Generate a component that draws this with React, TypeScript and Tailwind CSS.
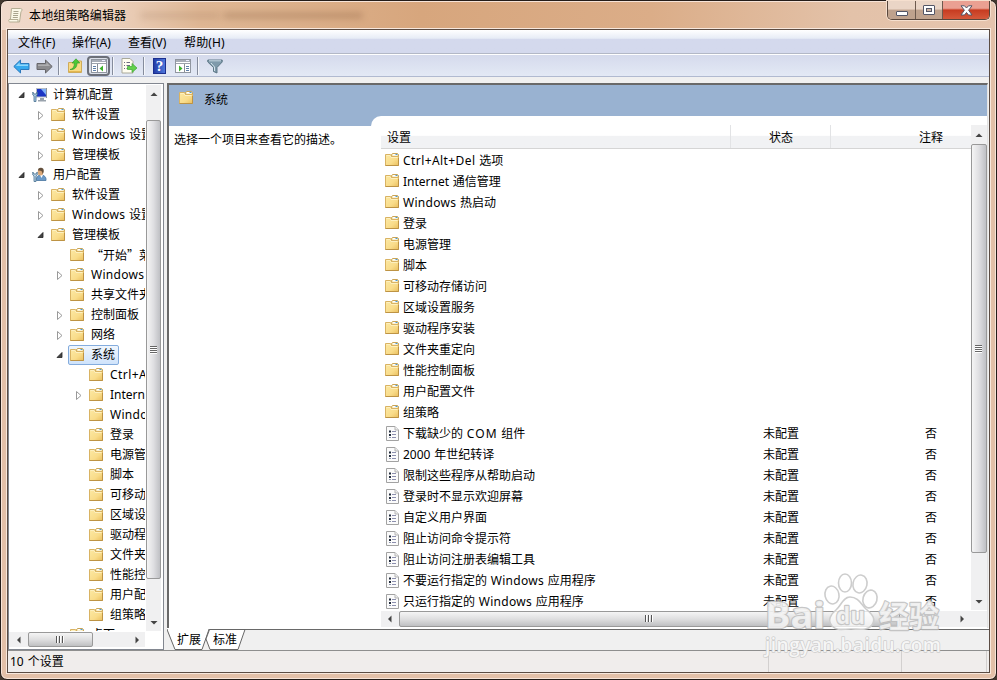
import React from "react";

const FolderIcon = ({ className = "" }: { className?: string }) => (
  <svg width="15" height="14" viewBox="0 0 15 14" className={"shrink-0 " + className}>
    <defs>
      <linearGradient id="fold" x1="0" y1="0" x2="1" y2="1">
        <stop offset="0" stopColor="#fce9a4" />
        <stop offset="0.6" stopColor="#f9dc8a" />
        <stop offset="1" stopColor="#eabf5e" />
      </linearGradient>
    </defs>
    <path d="M6.500 4V1.500L7.500 .5H12.500L13.500 1.500V4Z" fill="#f6e4ae" stroke="#c9a457" />
    <path d="M8 1H12V2.500H8Z" fill="#fff" />
    <path d="M10.500 1H12.500V2H10.500Z" fill="#4a9bd8" />
    <path d="M.5 1.500H5.500L6.500 3.500H13.500V12.500H.5Z" fill="url(#fold)" stroke="#d9b363" />
    <path d="M1.500 2.500H5L6 4.500H12.500" fill="none" stroke="#fdf0c0" />
    <path d="M.5 12.500H13.500V5" fill="none" stroke="#bd9344" />
  </svg>
);

const PolicyIcon = () => (
  <svg width="15" height="15" viewBox="0 0 15 15" className="shrink-0">
    <path d="M1.500 .5H10L13.500 4V14.500H1.500Z" fill="#fbfbfb" stroke="#a2a2a2" />
    <path d="M10 .5V4H13.500" fill="#eee" stroke="#b5b5b5" />
    <path d="M4 4.500H6V6.500H4ZM4 8H6V10H4Z" fill="#222c3c" />
    <path d="M4 11.500H6" stroke="#8a93a8" />
    <path d="M7 5.500H11M7 8.500H11M7 11.500H11" stroke="#8c8fae" />
  </svg>
);

const ComputerIcon = () => (
  <svg width="16" height="16" viewBox="0 0 16 16" className="shrink-0">
    <rect x="4.500" y="1.500" width="10" height="8.500" fill="#1b35c4" stroke="#b7bec8" />
    <path d="M9 2H14V8Z" fill="#7fb0f8" />
    <path d="M14.500 1V11" stroke="#8b939d" />
    <path d="M8 11H12V13H14V14.500H6V13H8Z" fill="#9aa3ad" />
    <path d="M.8 5V8L2 9V14.500H4V9L5.200 8V5L4 7H2Z" fill="#aac8df" stroke="#46708f" strokeWidth=".8" />
  </svg>
);

const UserIcon = () => (
  <svg width="16" height="16" viewBox="0 0 16 16" className="shrink-0">
    <path d="M4.500 13.500C4 10 6 8 9 8S14.500 10 14 13.500Z" fill="#6b9ac8" stroke="#47759f" strokeWidth=".8" />
    <path d="M8 8L9.500 11L11 8Z" fill="#fff" />
    <ellipse cx="8.500" cy="5" rx="2.800" ry="3.500" fill="#dba878" />
    <path d="M6 3.500C6 1 8 .5 10 1S12.500 5 10.500 7C10.500 4 9 3.200 6 3.500Z" fill="#64503c" />
    <path d="M.8 5V8L2 9V14.500H4V9L5.200 8V5L4 7H2Z" fill="#b9d2e5" stroke="#46708f" strokeWidth=".8" />
  </svg>
);

const Arrow = ({ open }: { open: boolean }) =>
  open ? (
    <svg width="8" height="8" viewBox="0 0 8 8">
      <path d="M6 1.500V6.500H1Z" fill="#444" stroke="#222" strokeWidth=".8" />
    </svg>
  ) : (
    <svg width="8" height="9" viewBox="0 0 8 9">
      <path d="M1.500 .5V8.500L6 4.500Z" fill="#fff" stroke="#999" strokeWidth="1" />
    </svg>
  );

const tracking: Record<string, string> = {
  Windows: "tracking-[0.3px]",
  "Ctrl+Alt+Del": "tracking-[0.42px]",
  COM: "tracking-[1.1px]",
};

/* Gives each Latin word of a mixed label its own letter spacing. */
const Label = ({ text }: { text: string }) => (
  <span className="[word-spacing:0.6px]">
    {text.split(/([A-Za-z+]+)/).map((part, i) =>
      tracking[part] ? (
        <span key={i} className={tracking[part]}>
          {part}
        </span>
      ) : (
        part
      ),
    )}
  </span>
);

type Node = [level: number, label: string, state?: "open" | "closed", icon?: "pc" | "user"];
const tree: Node[] = [
  [0, "计算机配置", "open", "pc"],
  [1, "软件设置", "closed"],
  [1, "Windows 设置", "closed"],
  [1, "管理模板", "closed"],
  [0, "用户配置", "open", "user"],
  [1, "软件设置", "closed"],
  [1, "Windows 设置", "closed"],
  [1, "管理模板", "open"],
  [2, "“开始”菜单和任务栏"],
  [2, "Windows 组件", "closed"],
  [2, "共享文件夹"],
  [2, "控制面板", "closed"],
  [2, "网络", "closed"],
  [2, "系统", "open"],
  [3, "Ctrl+Alt+Del 选项"],
  [3, "Internet 通信管理", "closed"],
  [3, "Windows 热启动"],
  [3, "登录"],
  [3, "电源管理"],
  [3, "脚本"],
  [3, "可移动存储访问"],
  [3, "区域设置服务"],
  [3, "驱动程序安装"],
  [3, "文件夹重定向"],
  [3, "性能控制面板"],
  [3, "用户配置文件"],
  [3, "组策略"],
  [2, "桌面"],
];
const indents = ["pl-[9px]", "pl-[28px]", "pl-[47px]", "pl-[66px]"];

const folders = [
  "Ctrl+Alt+Del 选项",
  "Internet 通信管理",
  "Windows 热启动",
  "登录",
  "电源管理",
  "脚本",
  "可移动存储访问",
  "区域设置服务",
  "驱动程序安装",
  "文件夹重定向",
  "性能控制面板",
  "用户配置文件",
  "组策略",
];
const policies = [
  "下载缺少的 COM 组件",
  "2000 年世纪转译",
  "限制这些程序从帮助启动",
  "登录时不显示欢迎屏幕",
  "自定义用户界面",
  "阻止访问命令提示符",
  "阻止访问注册表编辑工具",
  "不要运行指定的 Windows 应用程序",
  "只运行指定的 Windows 应用程序",
];

function TreeRow({ node }: { node: Node }) {
  const [level, label, state, icon] = node;
  const selected = label === "系统";
  return (
    <div className={"flex h-5 items-center whitespace-nowrap " + indents[level]}>
      <span className="-ml-px flex w-[9px] shrink-0 items-center justify-center">{state && <Arrow open={state === "open"} />}</span>
      <span
        className={
          "ml-[4px] flex h-[20px] items-center rounded-[2px] border pr-[3px] " +
          (selected ? "border-[#84acdd] bg-linear-to-b from-[#f0f6fd] to-[#cfe3fb]" : "border-transparent")
        }
      >
        <span className="flex w-[18px] shrink-0 items-center pl-px">
          {icon === "pc" ? <ComputerIcon /> : icon === "user" ? <UserIcon /> : <FolderIcon className="-mt-px" />}
        </span>
        <span
          className={
            "pl-[4px] " + (label.startsWith("“") ? "font-['Noto_Sans_CJK_SC',sans-serif]" : "")
          }
        >
          <Label text={label} />
        </span>
      </span>
    </div>
  );
}

const Tri = ({ dir }: { dir: "up" | "down" | "left" | "right" }) => {
  const d = { up: "M.5 6L4 2.500L7.500 6Z", down: "M.5 2L4 5.500L7.500 2Z", left: "M5.500 .5L2 4L5.500 7.500Z", right: "M2.500 .5L6 4L2.500 7.500Z" }[dir];
  return (
    <svg width="8" height="8" viewBox="0 0 8 8" className="shrink-0">
      <path d={d} fill="#444" />
    </svg>
  );
};

const GripV = () => (
  <div className="mr-px flex flex-col gap-px">
    {[0, 1, 2, 3].map((i) => (
      <div key={i} className="h-px w-[7px] bg-[#666] shadow-[0_1px_0_#fff]" />
    ))}
  </div>
);
const GripH = () => (
  <div className="mr-[2px] mb-px flex gap-[2px]">
    {[0, 1, 2].map((i) => (
      <div key={i} className="h-[7px] w-px bg-[#555] shadow-[1px_0_0_#fff]" />
    ))}
  </div>
);
const thumbV =
  "flex w-full items-center justify-center rounded-[2px] border border-[#999] bg-linear-to-r from-[#f5f5f5] via-[#dfdfe2] to-[#bfc0c4]";
const thumbH =
  "flex h-full items-center justify-center rounded-[2px] border border-[#999] bg-linear-to-b from-[#f5f5f5] via-[#dfdfe0] to-[#bfc0c2]";

const Sep = () => <div className="h-[18px] w-px bg-[#858c9c] shadow-[1px_0_0_#f4f6fb]" />;

const NavArrow = ({ blue }: { blue?: boolean }) => (
  <svg width="17" height="15" viewBox="0 0 17 15" className={blue ? "" : "-scale-x-100"}>
    <path
      d="M.8 7.500L7.500 1V4.500H16V10.500H7.500V14Z"
      fill={blue ? "#36a9ee" : "#8b8b8e"}
      stroke={blue ? "#2c78bb" : "#66666a"}
      strokeLinejoin="round"
    />
    <path d="M2.800 7L6.500 3.500V5.500H15V7Z" fill={blue ? "#8fd7fb" : "#aeaeb0"} />
  </svg>
);

const PaneIcon = ({ right }: { right?: boolean }) => (
  <svg width="16" height="14" viewBox="0 0 16 14">
    <rect x=".5" y=".5" width="15" height="13" fill="#fff" stroke="#9096a0" />
    <path d="M1 1H15V3H1Z" fill="#a9aeb8" />
    <path d="M11 1.500H14" stroke="#eef" />
    <path d="M1 4.500H15" stroke="#9da2ac" />
    <path d={right ? "M9.500 5V13" : "M6.500 5V13"} stroke="#8a8e96" />
    <path d={right ? "M11 7.500H14M11 9.500H14M11 11.500H14" : "M2 7.500H5M2 9.500H5M2 11.500H5"} stroke="#5f7fa8" />
    <path d={right ? "M4 6.500V12.500L7.500 9.500Z" : "M12 6.500V12.500L8.500 9.500Z"} fill="#3db22c" />
  </svg>
);

function Toolbar() {
  return (
    <div className="flex h-[22px] shrink-0 items-center border-b border-[#b1bad0] bg-linear-to-b from-[#d5daec] to-[#e3e9f5] pt-px pl-[5px]">
      <NavArrow blue />
      <div className="ml-[6px] flex"><NavArrow /></div>
      <div className="ml-[5px]"><Sep /></div>
      <svg className="ml-[9px]" width="15" height="16" viewBox="0 0 15 16">
        <path d="M.5 4.500H6L7 3H13.500V14.500H.5Z" fill="#f8da84" stroke="#cfab5a" />
        <path d="M1 13.500H13" stroke="#e3b74f" />
        <path d="M2 11.500C5 11 6.500 9 6.300 5H4L8 .8L11.800 5H9C9 9 7 12 2 11.500Z" fill="#4cc936" stroke="#3a9c2c" strokeWidth=".7" />
      </svg>
      <div className="-mt-px ml-[4px] flex h-5 w-[23px] items-center justify-center rounded-[4px] border-2 border-[#6b6f79] bg-[#dbdfe9]">
        <PaneIcon />
      </div>
      <div className="ml-[2px]"><Sep /></div>
      <svg className="ml-[8px]" width="17" height="16" viewBox="0 0 17 16">
        <path d="M1 .5H9L12 3.500V15H1Z" fill="#fffdf0" stroke="#a9a99a" />
        <path d="M3 4.500H4M5.500 4.500H9M3 7.500H4M5.500 7.500H9M3 10.500H4M5.500 10.500H8" stroke="#6b6b80" />
        <path d="M6.500 8.500H11V5.500L16 10L11 14.500V11.500H6.500Z" fill="#63d14c" stroke="#3fa637" strokeWidth=".7" />
      </svg>
      <div className="ml-[5px]"><Sep /></div>
      <div className="ml-[9px] flex h-[16px] w-[13px] items-center justify-center border border-[#1b2f8f] bg-linear-to-r from-[#233da8] to-[#4f77dc] font-['Liberation_Serif',serif] text-[15px] leading-none font-bold text-white">
        ?
      </div>
      <div className="ml-[9px] flex"><PaneIcon right /></div>
      <div className="ml-[6px]"><Sep /></div>
      <svg className="ml-[9px]" width="16" height="15" viewBox="0 0 16 15">
        <path d="M.8 1H15.200V3L10 8.500V14L6.500 12.500V8.500L.8 3Z" fill="#7f9aab" stroke="#55707f" strokeWidth=".9" />
        <path d="M2 1.800H14" stroke="#c9dbe5" />
        <path d="M4 4L7.500 8V12" fill="none" stroke="#d2e2ea" />
      </svg>
    </div>
  );
}

function TreePane() {
  return (
    <div className="flex h-[567px] w-[156px] flex-col border border-[#828790] bg-white pr-[1px]">
      <div className="flex h-[547px]">
        <div className="h-[547px] w-[136px] overflow-hidden pt-px">
          {tree.map((n, i) => (
            <TreeRow key={i} node={n} />
          ))}
        </div>
        <div className="mt-px ml-px flex h-[546px] w-[15px] flex-col items-center bg-[#f0f0f1]">
          <div className="flex h-[35px] items-start pt-[5px]"><Tri dir="up" /></div>
          <div className={thumbV + " h-[459px]"}><GripV /></div>
          <div className="flex flex-1 items-end pb-[4px]"><Tri dir="down" /></div>
        </div>
      </div>
      <div className="mt-px flex h-[15px] w-[136px] items-center bg-[#f0f0f1]">
        <div className="flex w-[19px] justify-center"><Tri dir="left" /></div>
        <div className={thumbH + " w-[65px]"}><GripH /></div>
        <div className="flex flex-1 justify-end pr-[4px]"><Tri dir="right" /></div>
      </div>
    </div>
  );
}

function SettingsList() {
  return (
    <div className="flex w-[616px] flex-col rounded-tl-[10px] bg-white pt-[9px] pl-[10px]">
      <div className="flex h-[485px]">
        <div className="w-[590px] overflow-hidden">
          <div className="flex h-[24px] items-center border-b border-[#d5d5d5] bg-linear-to-b from-white from-45% to-[#f1f2f4] to-50%">
            <div className="flex h-full w-[350px] shrink-0 items-center border-r border-[#e2e3e5] pt-[3px] pl-[6px]">设置</div>
            <div className="flex h-full w-[100px] shrink-0 items-center justify-center border-r border-[#e2e3e5] pt-[3px] pl-px">状态</div>
            <div className="flex h-full w-[200px] shrink-0 items-center justify-center pt-[3px]">注释</div>
          </div>
          <div className="pt-px">
            {folders.map((f) => (
              <div key={f} className="flex h-[21px] items-center pl-[4px] whitespace-nowrap">
                <FolderIcon className="-mt-px" />
                <span className="ml-[3px]"><Label text={f} /></span>
              </div>
            ))}
            {policies.map((p) => (
              <div key={p} className="flex h-[21px] items-center whitespace-nowrap">
                <div className="flex w-[350px] shrink-0 items-center pl-[4px]">
                  <PolicyIcon />
                  <span className="ml-[3px]"><Label text={p} /></span>
                </div>
                <div className="w-[100px] shrink-0 text-center">未配置</div>
                <div className="w-[200px] shrink-0 text-center">否</div>
              </div>
            ))}
          </div>
        </div>
        <div className="flex w-[16px] flex-col items-center bg-[#f0f0f1]">
          <div className="flex h-[19px] items-center"><Tri dir="up" /></div>
          <div className={thumbV + " h-[409px]"}><GripV /></div>
          <div className="flex flex-1 items-end pb-[4px]"><Tri dir="down" /></div>
        </div>
      </div>
      <div className="mt-px flex h-[16px] items-center bg-[#f0f0f1]">
        <div className="flex w-[18px] justify-center"><Tri dir="left" /></div>
        <div className={thumbH + " w-[501px]"}><GripH /></div>
        <div className="flex w-[71px] justify-end pr-[5px]"><Tri dir="right" /></div>
      </div>
    </div>
  );
}

const WatermarkText = () => (
  <>
    <text x="3" y="58" fontSize="36" textLength="60" lengthAdjust="spacingAndGlyphs">Bai</text>
    <text x="74" y="54" fontSize="24" textLength="29" lengthAdjust="spacingAndGlyphs">du</text>
    <text x="117" y="57" fontSize="30" textLength="60" lengthAdjust="spacingAndGlyphs">经验</text>
  </>
);

function Watermark() {
  return (
    <div className="pointer-events-none absolute top-[570px] left-[762px] h-[92px] w-[184px]">
      <svg width="184" height="92" viewBox="0 0 184 92" fontFamily="'Open Sans','Noto Sans CJK SC',sans-serif">
        <g fill="#fff" fillOpacity=".75" stroke="#cdcdcd" strokeWidth="1.600">
          <ellipse cx="70" cy="25" rx="7" ry="9" transform="rotate(-12 70 25)" />
          <ellipse cx="83" cy="13" rx="6.500" ry="9" />
          <ellipse cx="98" cy="14" rx="7" ry="9" transform="rotate(12 98 14)" />
          <ellipse cx="108" cy="29" rx="7" ry="9" transform="rotate(15 108 29)" />
          <path d="M88 27C96 27 99 34 104 39C111 45 114 49 110 55C106 61 97 59 89 59S75 61 70 56C65 50 69 44 74 40S81 27 88 27Z" />
        </g>
        <g
          fill="#f4f4f4"
          fillOpacity=".9"
          stroke="#bdbdbd"
          strokeOpacity=".85"
          strokeWidth="2.400"
          strokeLinejoin="round"
          paintOrder="stroke"
          fontWeight="700"
        >
          <WatermarkText />
          <text x="3" y="82" fontSize="19" fontWeight="600" fill="#fafafa" strokeWidth="1.400" stroke="#c6c6c6" textLength="176" lengthAdjust="spacing">jingyan.baidu.com</text>
        </g>
      </svg>
    </div>
  );
}

function TitleBar() {
  return (
    <div className="flex h-[27px] shrink-0 items-start justify-between">
      <div className="flex items-center pt-[5px] pl-[7px]">
        <svg width="16" height="17" viewBox="0 0 16 17">
          <path d="M3.500 1.500H12.500C14.500 1.500 14.500 4 13 4.500L11.500 15H2C0 15 .5 12 2.500 12Z" fill="#fbf8e8" stroke="#b5ae94" />
          <path d="M5.500 4.500H10.500M5.300 6.500H10.300M5 8.500H10M4.800 10.500H9.800" stroke="#a9a48e" />
          <path d="M1 12.500H10V15" fill="none" stroke="#b5ae94" />
        </svg>
        <span className="ml-[5px] pt-px text-[12px] leading-[17px] tracking-[0.15px]">本地组策略编辑器</span>
        <div className="ml-[14px] h-[7px] w-[80px] rounded bg-[#775035]/15 blur-[3px]" />
        <div className="ml-[3px] h-[7px] w-[140px] rounded bg-[#775035]/25 blur-[3px]" />
      </div>
      <div className="mr-[6px] flex h-[19px] overflow-hidden rounded-b-[5px] border border-t-0 border-[#59473c] shadow-[0_0_0_1px_#f5dfce]">
        <div className="flex w-[28px] items-center justify-center border-r border-[#6d5a4e] bg-linear-to-b from-[#ead5c6] from-45% to-[#bfa28d] to-50%">
          <div className="mt-[6px] h-[5px] w-[12px] rounded-[1px] border border-[#535666] bg-white" />
        </div>
        <div className="flex w-[27px] items-center justify-center border-r border-[#6d5a4e] bg-linear-to-b from-[#ead5c6] from-45% to-[#bfa28d] to-50%">
          <div className="flex h-[10px] w-[12px] items-center justify-center rounded-[1px] border border-[#535666] bg-white">
            <div className="h-[4px] w-[6px] border border-[#535666] bg-[#ccb5a5]" />
          </div>
        </div>
        <div className="flex w-[46px] items-center justify-center bg-linear-to-b from-[#eaa092] from-40% via-[#c73b20] via-50% to-[#d5583a]">
          <svg width="13" height="11" viewBox="0 0 13 11">
            <path d="M1 .8H4.500L6.500 3L8.500 .8H12L8.600 5.200L12 10H8.500L6.500 7.500L4.500 10H1L4.400 5.200Z" fill="#fff" stroke="#535666" />
          </svg>
        </div>
      </div>
    </div>
  );
}

export default function App() {
  return (
    <div className="relative h-[680px] w-[997px] overflow-hidden bg-[#42382f] font-['Noto_Sans','Noto_Sans_CJK_SC',sans-serif] text-[12px] leading-[18px] text-black">
      <div className="flex h-[680px] w-[997px] flex-col rounded-[7px] border border-[#251d19] bg-[#e3c0a8] bg-[linear-gradient(90deg,#f0d9cb_0,#ecd1bd_110px,#dfb794_200px,#d7a67d_420px,#dbad88_650px,#e3c2a9_850px,#e5c4ae_997px)] bg-size-[100%_29px] bg-no-repeat shadow-[inset_0_0_0_1px_#f7e4d8]">
        <TitleBar />
        <div className="ml-[5px] flex h-[646px] w-[985px] flex-col border border-[#f8e8dd]">
          <div className="flex h-[644px] w-[983px] flex-col border border-[#5b4c43] bg-[#f0f0f0]">
            <div className="flex h-[24px] shrink-0 items-center border-b border-[#b3b8c6] bg-linear-to-b from-white via-[#e7ecf6] via-36% to-[#d4d9ed] to-40% pt-[2px] pl-[10px]">
              <span className="w-[54px]">文件(F)</span>
              <span className="w-[56px]">操作(A)</span>
              <span className="w-[56px]">查看(V)</span>
              <span className="tracking-[0.15px]">帮助(H)</span>
            </div>
            <div className="h-px shrink-0 bg-white" />
            <Toolbar />
            <div className="flex pt-[6px]">
              <TreePane />
              <div className="ml-[3px] flex h-[567px] w-[822px] flex-col">
                <div className="mr-px flex h-[545px] flex-col border-t-2 border-l-2 border-[#696969] border-r border-r-[#e3e3e3] bg-white">
                  <div className="flex h-[31px] items-center bg-[#99b2d1] pl-[10px]">
                    <FolderIcon className="-mt-[5px]" />
                    <span className="-mt-px ml-[10px]">系统</span>
                  </div>
                  <div className="flex h-[512px] bg-[linear-gradient(#99b2d1,#99b2d1)] bg-size-[100%_10px] bg-no-repeat">
                    <div className="w-[202px] shrink-0 pt-[15px] pl-[5px] whitespace-nowrap">选择一个项目来查看它的描述。</div>
                    <SettingsList />
                  </div>
                </div>
                <svg width="822" height="22" viewBox="0 0 822 22" fontSize="12" className="bg-[#f0f0f0]">
                  <path d="M0 0H822V1H0Z" fill="#fff" />
                  <path d="M0 1.500H822" stroke="#696969" />
                  <path d="M0 0H42L35 21.500H8Z" fill="#fff" />
                  <path d="M0 1.500L8 21.500H35L42 1.500" fill="none" stroke="#666" />
                  <path d="M42.500 1.500L39 11L43 21.500H71L78 1.500Z" fill="#fff" stroke="#666" />
                  <text x="10" y="16">扩展</text>
                  <text x="46" y="16">标准</text>
                </svg>
              </div>
            </div>
            <div className="flex h-[22px] items-stretch border-t border-[#8e8e8e] bg-[#f0edec] pl-[2px]">
              <span className="w-[759px] border-r border-[#d3d0cf] pt-[2px] [word-spacing:1px]">10 个设置</span>
              <span className="w-[133px] border-r border-[#d3d0cf]" />
              <span className="w-[85px] border-r border-[#d3d0cf]" />
            </div>
          </div>
        </div>
      </div>
      <Watermark />
    </div>
  );
}
